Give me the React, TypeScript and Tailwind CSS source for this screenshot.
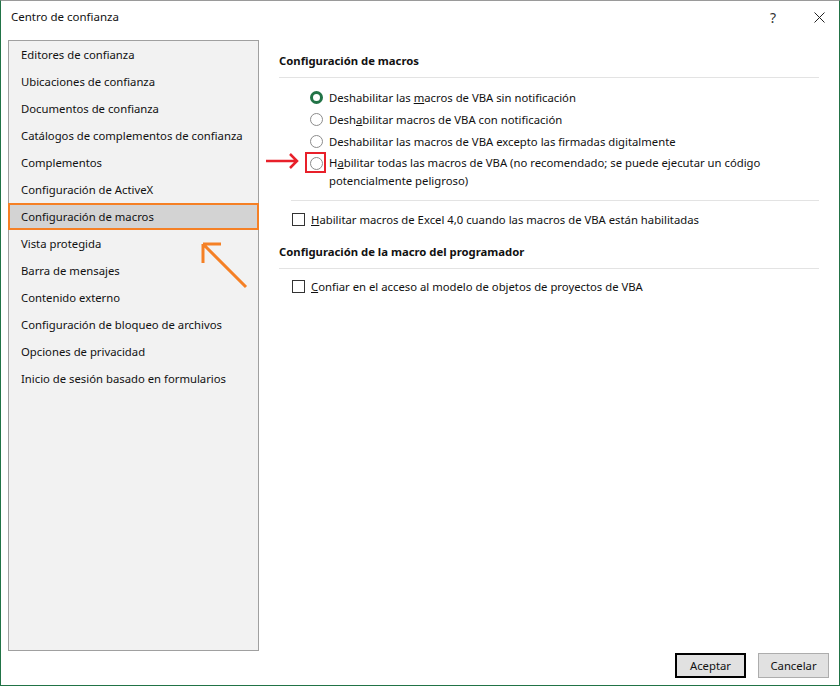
import React from "react";

const navItems = [
  "Editores de confianza",
  "Ubicaciones de confianza",
  "Documentos de confianza",
  "Catálogos de complementos de confianza",
  "Complementos",
  "Configuración de ActiveX",
  "Configuración de macros",
  "Vista protegida",
  "Barra de mensajes",
  "Contenido externo",
  "Configuración de bloqueo de archivos",
  "Opciones de privacidad",
  "Inicio de sesión basado en formularios",
];

const Radio = ({ checked }: { checked?: boolean }) =>
  checked ? (
    <span className="box-border inline-block h-[13px] w-[13px] shrink-0 rounded-full border-[3.5px] border-[#217346] bg-white" />
  ) : (
    <span className="box-border inline-block h-[13px] w-[13px] shrink-0 rounded-full border border-[#8c8c8c] bg-white" />
  );

const Checkbox = () => (
  <span className="box-border inline-block h-[13px] w-[13px] shrink-0 border border-[#333333] bg-white" />
);

const App = () => {
  return (
    <div
      className="relative box-border flex h-[686px] w-[840px] flex-col border-x border-b border-t border-[#217346] border-t-[#9a9a9a] bg-white text-[11.3px] leading-[17px] text-[#111]"
      style={{ fontFamily: '"Noto Sans", "Open Sans", sans-serif' }}
    >
      {/* Title bar */}
      <div className="flex h-[39px] items-start pl-[10px] pr-[14px] pt-[7px]">
        <span className="flex-1 text-[11.5px]">Centro de confianza</span>
        <span className="mr-[38px] mt-[1px] text-[14px] leading-[17px] text-[#333]">?</span>
        <svg width="11" height="11" viewBox="0 0 11 11" className="mt-[4px] text-[#222]">
          <path d="M0.5 0.5 L10.5 10.5 M10.5 0.5 L0.5 10.5" stroke="currentColor" strokeWidth="1" />
        </svg>
      </div>

      {/* Body */}
      <div className="flex flex-1">
        {/* Left nav */}
        <div className="ml-[7px] box-border w-[251px] border border-[#a0a0a0] bg-[#f2f2f2]">
          {navItems.map((item) =>
            item === "Configuración de macros" ? (
              <div
                key={item}
                className="-mx-px box-border flex h-[27px] items-center border-2 border-[#f58025] bg-[#d3d3d3] pl-[11px]"
              >
                {item}
              </div>
            ) : (
              <div key={item} className="flex h-[27px] items-center pl-[12px]">
                {item}
              </div>
            )
          )}
        </div>

        {/* Right pane */}
        <div className="flex-1 pl-[20px] pr-[20px] pt-[12px]">
          <div className="border-b border-[#e3e3e3] pb-[8px] font-bold">Configuración de macros</div>

          <div className="ml-[31px] mt-[8px] flex flex-col">
            <label className="flex h-[22px] items-center gap-[6px]">
              <Radio checked />
              <span>
                Deshabilitar las <u>m</u>acros de VBA sin notificación
              </span>
            </label>
            <label className="flex h-[22px] items-center gap-[6px]">
              <Radio />
              <span>
                Desh<u>a</u>bilitar macros de VBA con notificación
              </span>
            </label>
            <label className="flex h-[22px] items-center gap-[6px]">
              <Radio />
              <span>Deshabilitar las macros de VBA excepto las firmadas digitalmente</span>
            </label>
            <label className="relative flex items-start gap-[6px] pt-[2px]">
              <span className="mt-[3px] flex">
                <Radio />
              </span>
              <span className="leading-[18px]">
                H<u>a</u>bilitar todas las macros de VBA (no recomendado; se puede ejecutar un código
                <br />
                potencialmente peligroso)
              </span>
              {/* annotation: red box + arrow */}
              <span className="absolute left-[-5px] top-0 h-[21px] w-[21px] border-2 border-[#e8202a]" />
              <svg
                className="absolute left-[-44px] top-[1px]"
                width="34"
                height="16"
                viewBox="0 0 34 16"
              >
                <path d="M0 8 H31 M24 1 L31 8 L24 15" fill="none" stroke="#e8202a" strokeWidth="2.5" />
              </svg>
            </label>
          </div>

          <div className="ml-[12px] mt-[10px] border-t border-[#e3e3e3]" />

          <label className="ml-[13px] mt-[10px] flex items-center gap-[6px]">
            <Checkbox />
            <span>
              <u>H</u>abilitar macros de Excel 4,0 cuando las macros de VBA están habilitadas
            </span>
          </label>

          <div className="mt-[15px] border-b border-[#e3e3e3] pb-[8px] font-bold">
            Configuración de la macro del programador
          </div>

          <label className="ml-[13px] mt-[9px] flex items-center gap-[6px]">
            <Checkbox />
            <span>
              <u>C</u>onfiar en el acceso al modelo de objetos de proyectos de VBA
            </span>
          </label>
        </div>
      </div>

      {/* Footer buttons */}
      <div className="flex h-[34px] items-start justify-end gap-[12px] pr-[10px] pt-[2px]">
        <button className="box-border h-[25px] w-[71px] border-2 border-[#000] bg-[#e1e1e1]">Aceptar</button>
        <button className="box-border h-[25px] w-[71px] border border-[#adadad] bg-[#e1e1e1]">Cancelar</button>
      </div>

      {/* annotation: orange arrow */}
      <svg className="absolute left-[199px] top-[240px]" width="50" height="50" viewBox="0 0 50 50">
        <path d="M46 46 L3 3 M3 3 H21 M3 3 V22" fill="none" stroke="#f58025" strokeWidth="3" />
      </svg>
    </div>
  );
};

export default App;
